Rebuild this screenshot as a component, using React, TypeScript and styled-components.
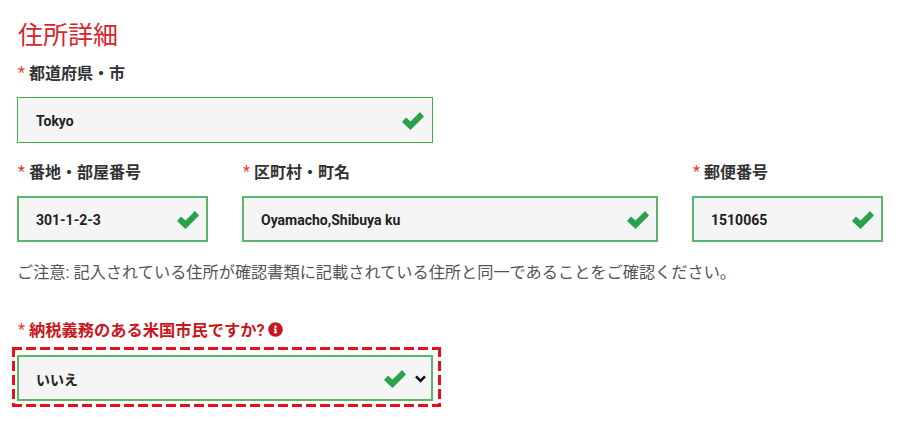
import React from 'react'
import styled, { createGlobalStyle } from 'styled-components'
import { FaInfoCircle } from 'react-icons/fa'

const GlobalStyle = createGlobalStyle`
    html, body {
        margin: 0;
        background: white;
        font-family: Roboto, "Noto Sans CJK JP", sans-serif;
    }
`
const Page = styled.div`
    width: 900px;
    height: 440px;
    box-sizing: border-box;
    padding: 20px 0 0 17px;
    overflow: hidden;
`
const Title = styled.h2`
    margin: 0 0 0 1px;
    height: 24px;
    font-size: 25px;
    line-height: 32px;
    font-weight: 400;
    color: #d9232a;
`
const Row = styled.div`
    display: flex;
    gap: 34px;
    margin-top: 17px;
`
const Field = styled.div<{ $width: number }>`
    width: ${p => p.$width}px;
`
const Label = styled.label<{ $alert?: boolean }>`
    display: flex;
    align-items: center;
    height: 22px;
    margin-bottom: 14px;
    font-size: ${p => (p.$alert ? '16.25px' : '16px')};
    font-weight: 700;
    color: ${p => (p.$alert ? '#c8171e' : '#333')};
`
const Star = styled.span`
    color: #e2402f;
    margin: 0 4px 0 1px;
    font-weight: 400;
`
const Box = styled.div<{ $thick?: boolean }>`
    display: flex;
    align-items: center;
    height: 46px;
    box-sizing: border-box;
    border: ${p => (p.$thick ? '2px solid #5cb56c' : '1px solid #3fae4f')};
    background: #f5f5f5;
    padding: 1px ${p => (p.$thick ? '7px' : '8px')} 0 ${p => (p.$thick ? '17px' : '18px')};
    font-size: 14px;
    font-weight: 700;
    color: #222;
`
const Value = styled.span`
    flex: 1;
`
const Info = styled(FaInfoCircle)`
    color: #c8171e;
    font-size: 15px;
    margin-left: 3px;
`
const Note = styled.p`
    margin: 20px 0 0;
    height: 22px;
    font-size: 16.2px;
    line-height: 22px;
    color: #555;
`
const Question = styled.div`
    margin-top: 34px;
    width: 416px;
`
const Highlight = styled.div`
    margin: -7px 0 0 -5px;
    width: 429px;
    box-sizing: border-box;
    padding: 8px 8px 6px 5px;
    background:
        repeating-linear-gradient(90deg, #e5101a 0 10px, transparent 10px 14px) top / 100% 3px no-repeat,
        repeating-linear-gradient(90deg, #e5101a 0 10px, transparent 10px 14px) bottom / 100% 3px no-repeat,
        repeating-linear-gradient(180deg, #e5101a 0 10px, transparent 10px 14px) left / 3px 100% no-repeat,
        repeating-linear-gradient(180deg, #e5101a 0 10px, transparent 10px 14px) right / 3px 100% no-repeat;
`

const Check = () => (
    <svg width="22" height="18" viewBox="0 0 22 18">
        <path d="M0 10 L4 5.5 L8.5 9.5 L18 0 L22 4.5 L8.5 18 Z" fill="#28a24b" />
    </svg>
)

const Chevron = () => (
    <svg width="11" height="8" viewBox="0 0 11 8" style={{ margin: '0 -2px 0 9px' }}>
        <path d="M1 1.3 L5.5 5.8 L10 1.3" fill="none" stroke="#111" strokeWidth="2.6" />
    </svg>
)

const InputField = ({ width, label, value, thick }: { width: number; label: string; value: string; thick?: boolean }) => (
    <Field $width={width}>
        <Label><Star>*</Star>{label}</Label>
        <Box $thick={thick}>
            <Value>{value}</Value>
            <Check />
        </Box>
    </Field>
)

const App = () => {
    return (
        <Page>
            <GlobalStyle />
            <Title>住所詳細</Title>
            <Row>
                <InputField width={416} label="都道府県・市" value="Tokyo" />
            </Row>
            <Row>
                <InputField width={191} label="番地・部屋番号" value="301-1-2-3" thick />
                <InputField width={416} label="区町村・町名" value="Oyamacho,Shibuya ku" thick />
                <InputField width={191} label="郵便番号" value="1510065" thick />
            </Row>
            <Note>ご注意: 記入されている住所が確認書類に記載されている住所と同一であることをご確認ください。</Note>
            <Question>
                <Label $alert><Star>*</Star>納税義務のある米国市民ですか?<Info /></Label>
                <Highlight>
                    <Box $thick>
                        <Value>いいえ</Value>
                        <Check />
                        <Chevron />
                    </Box>
                </Highlight>
            </Question>
        </Page>
    )
}

export default App
